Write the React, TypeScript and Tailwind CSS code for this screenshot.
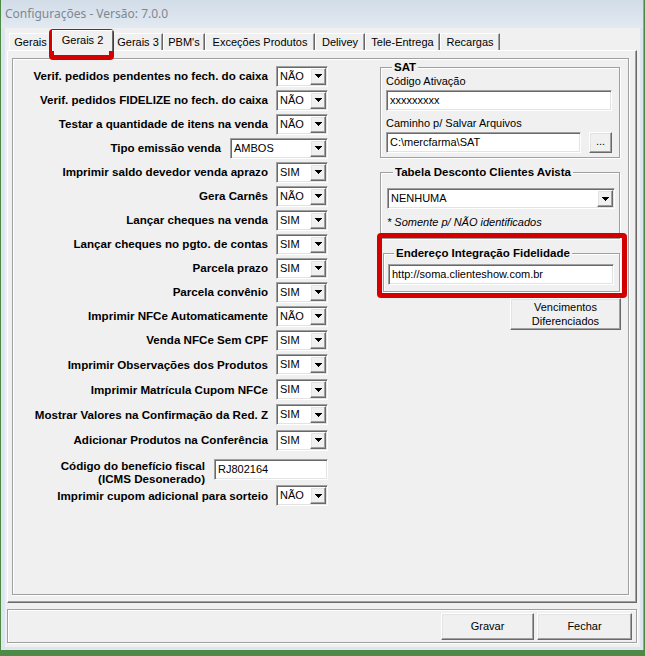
import React from "react";

const font = "font-['Liberation_Sans',Arial,sans-serif]";

// classic 3D edges
const sunken =
    "border border-t-[#a0a0a0] border-l-[#a0a0a0] border-b-white border-r-white shadow-[inset_1px_1px_0_#696969,inset_-1px_-1px_0_#e3e3e3] p-[1px]";
const raised =
    "border border-t-white border-l-white border-b-[#696969] border-r-[#696969] shadow-[inset_-1px_-1px_0_#a0a0a0,inset_1px_1px_0_#e3e3e3]";
const etched = "border border-[#a0a0a0] shadow-[1px_1px_0_#fff,inset_1px_1px_0_#fff]";

type Row = { label: string; value: string; h: string; kind?: "wide" | "text" };

const rows: Row[] = [
    { label: "Verif. pedidos pendentes no fech. do caixa", value: "NÃO", h: "h-[24px]" },
    { label: "Verif. pedidos FIDELIZE no fech. do caixa", value: "NÃO", h: "h-[24px]" },
    { label: "Testar a quantidade de itens na venda", value: "NÃO", h: "h-[24px]" },
    { label: "Tipo emissão venda", value: "AMBOS", h: "h-[24px]", kind: "wide" },
    { label: "Imprimir saldo devedor venda aprazo", value: "SIM", h: "h-[24px]" },
    { label: "Gera Carnês", value: "NÃO", h: "h-[24px]" },
    { label: "Lançar cheques na venda", value: "SIM", h: "h-[24px]" },
    { label: "Lançar cheques no pgto. de contas", value: "SIM", h: "h-[24px]" },
    { label: "Parcela prazo", value: "SIM", h: "h-[24px]" },
    { label: "Parcela convênio", value: "SIM", h: "h-[24px]" },
    { label: "Imprimir NFCe Automaticamente", value: "NÃO", h: "h-[24px]" },
    { label: "Venda NFCe Sem CPF", value: "SIM", h: "h-[24px]" },
    { label: "Imprimir Observações dos Produtos", value: "SIM", h: "h-[25px]" },
    { label: "Imprimir Matrícula Cupom NFCe", value: "SIM", h: "h-[25px]" },
    { label: "Mostrar Valores na Confirmação da Red. Z", value: "SIM", h: "h-[25px]" },
    { label: "Adicionar Produtos na Conferência", value: "SIM", h: "h-[26px]" },
    { label: "Código do benefício fiscal\n(ICMS Desonerado)", value: "RJ802164", h: "h-[33px]", kind: "text" },
    { label: "Imprimir cupom adicional para sorteio", value: "NÃO", h: "h-[19px]" },
];

const tabs = [
    { name: "Gerais", w: "w-[43px]" },
    { name: "Gerais 2", w: "w-[61px]", active: true },
    { name: "Gerais 3", w: "w-[50px]" },
    { name: "PBM's", w: "w-[42px]" },
    { name: "Exceções Produtos", w: "w-[110px]" },
    { name: "Delivey", w: "w-[50px]" },
    { name: "Tele-Entrega", w: "w-[75px]" },
    { name: "Recargas", w: "w-[60px]" },
];

function Arrow() {
    return (
        <svg width="7" height="4" viewBox="0 0 7 4" shapeRendering="crispEdges">
            <path d="M0 0h7v1H0z M1 1h5v1H1z M2 2h3v1H2z M3 3h1v1H3z" fill="#000" />
        </svg>
    );
}

function Combo({ value, w }: { value: string; w: string }) {
    return (
        <div className={`${sunken} ${w} h-[21px] bg-white flex`}>
            <span className="flex-1 pl-[2px] text-[11px] leading-[17px] text-black">{value}</span>
            <div className={`${raised} w-[16px] bg-[#f0f0f0] flex items-center justify-center`}>
                <Arrow />
            </div>
        </div>
    );
}

function TextBox({ value, w, h = "h-[21px]" }: { value: string; w: string; h?: string }) {
    return (
        <div className={`${sunken} ${w} ${h} bg-white flex items-center`}>
            <span className="pl-[2px] text-[11px] leading-[15px] text-black">{value}</span>
        </div>
    );
}

function Button({ children, className }: { children: React.ReactNode; className: string }) {
    return (
        <div className={`${raised} bg-[#f0f0f0] flex items-center justify-center text-center text-[11px] leading-[14px] text-black ${className}`}>
            {children}
        </div>
    );
}

function Group({ title, className, children }: { title: string; className: string; children: React.ReactNode }) {
    return (
        <fieldset className={`${etched} ${className}`}>
            <legend className="ml-[6px] px-[2px] text-[11.5px] leading-[14px] font-bold text-black bg-[#f0f0f0]">
                {title}
            </legend>
            {children}
        </fieldset>
    );
}

export default function App() {
    return (
        <div className={`${font} relative w-[645px] h-[656px] bg-[#4d8a45] overflow-hidden`}>
            <div className="w-[643px] h-[650px] ml-[1px] bg-[#dde6ef] border-r border-[#8fa3b5] flex flex-col">
                {/* title bar */}
                <div className="h-[28px] flex items-center pl-[4px] bg-gradient-to-b from-[#d2dde8] to-[#e2e9f1]">
                    <span className="font-['Noto_Sans',sans-serif] text-[12px] text-[#7d8893]">
                        Configurações - Versão: 7.0.0
                    </span>
                </div>

                <div className="ml-[4px] w-[635px] h-[619px] bg-[#f0f0f0] flex flex-col">
                    {/* tab strip */}
                    <div className="h-[22px] flex items-end pl-[4px]">
                        {tabs.map((t) =>
                            t.active ? (
                                <div
                                    key={t.name}
                                    className={`${t.w} h-[21px] -mb-[1px] relative z-10 bg-[#f0f0f0] border-t border-l border-white border-r border-r-[#696969] flex justify-center pt-[3px] text-[11px] leading-[13px] text-black`}
                                >
                                    {t.name}
                                </div>
                            ) : (
                                <div
                                    key={t.name}
                                    className={`${t.w} h-[17px] border-t border-l border-white border-r border-r-[#696969] shadow-[inset_-1px_0_0_#a0a0a0] flex items-center justify-center text-[11px] text-black`}
                                >
                                    {t.name}
                                </div>
                            )
                        )}
                    </div>

                    {/* tab sheet */}
                    <div className="ml-[2px] w-[630px] h-[553px] border border-t-white border-l-white border-r-[#696969] border-b-[#696969] shadow-[inset_-1px_-1px_0_#a0a0a0] pt-[7px] pl-[4px]">
                        <div className={`${etched} w-[617px] h-[537px] flex pt-[5px]`}>
                            {/* left column */}
                            <div className="w-[315px] flex flex-col">
                                {rows.map((r) => (
                                    <div key={r.label} className={`${r.h} flex items-center justify-end`}>
                                        <span
                                            className={`whitespace-pre-line text-right font-bold text-[11.6px] text-black ${
                                                r.kind === "text" ? "leading-[13px] pt-[4px] mr-[9px]" : "leading-[14px] mr-[8px]"
                                            } ${r.kind === "wide" ? "mr-[9px]" : ""}`}
                                        >
                                            {r.label}
                                        </span>
                                        {r.kind === "text" ? (
                                            <TextBox value={r.value} w="w-[114px]" />
                                        ) : (
                                            <Combo value={r.value} w={r.kind === "wide" ? "w-[98px]" : "w-[52px]"} />
                                        )}
                                    </div>
                                ))}
                            </div>

                            {/* right column */}
                            <div className="ml-[52px] w-[240px] flex flex-col -mt-[4px]">
                                <Group title="SAT" className="pl-[5px] pr-[7px] pb-[4px]">
                                    <div className="text-[11px] leading-[14px] text-black">Código Ativação</div>
                                    <div className="mt-[2px]">
                                        <TextBox value="xxxxxxxxx" w="w-[226px]" h="h-[21px]" />
                                    </div>
                                    <div className="mt-[5px] text-[11px] leading-[14px] text-black">Caminho p/ Salvar Arquivos</div>
                                    <div className="mt-[2px] flex">
                                        <TextBox value="C:\mercfarma\SAT" w="w-[195px]" />
                                        <Button className="ml-[8px] w-[23px] h-[21px] pb-[4px]">...</Button>
                                    </div>
                                </Group>

                                <Group title="Tabela Desconto Clientes Avista" className="mt-[7px] pl-[6px] pr-[3px] pb-[9px]">
                                    <div className="mt-[9px]">
                                        <Combo value="NENHUMA" w="w-[228px]" />
                                    </div>
                                    <div className="mt-[6px] text-[11px] leading-[14px] italic text-black">
                                        * Somente p/ NÃO identificados
                                    </div>
                                </Group>

                                <Group title="Endereço Integração Fidelidade" className="mt-[7px] ml-[3px] pl-[4px] pb-[6px]">
                                    <div className="mt-[4px]">
                                        <TextBox value="http://soma.clienteshow.com.br" w="w-[226px]" />
                                    </div>
                                </Group>

                                <Button className="mt-[6px] ml-auto mr-[-1px] w-[111px] h-[32px]">
                                    Vencimentos
                                    <br />
                                    Diferenciados
                                </Button>
                            </div>
                        </div>
                    </div>

                    {/* bottom bar */}
                    <div className={`${etched} mt-[6px] ml-[2px] w-[630px] h-[34px] flex items-center justify-end pr-[4px] gap-[3px]`}>
                        <Button className="w-[93px] h-[27px]">Gravar</Button>
                        <Button className="w-[95px] h-[27px]">Fechar</Button>
                    </div>
                </div>
            </div>

            {/* highlight frames */}
            <div className="absolute left-[49px] top-[29px] w-[65px] h-[31px] border-[5px] border-[#d40000] rounded-[4px]" />
            <div className="absolute left-[377px] top-[233px] w-[250px] h-[65px] border-[5px] border-[#d40000] rounded-[4px]" />
        </div>
    );
}
